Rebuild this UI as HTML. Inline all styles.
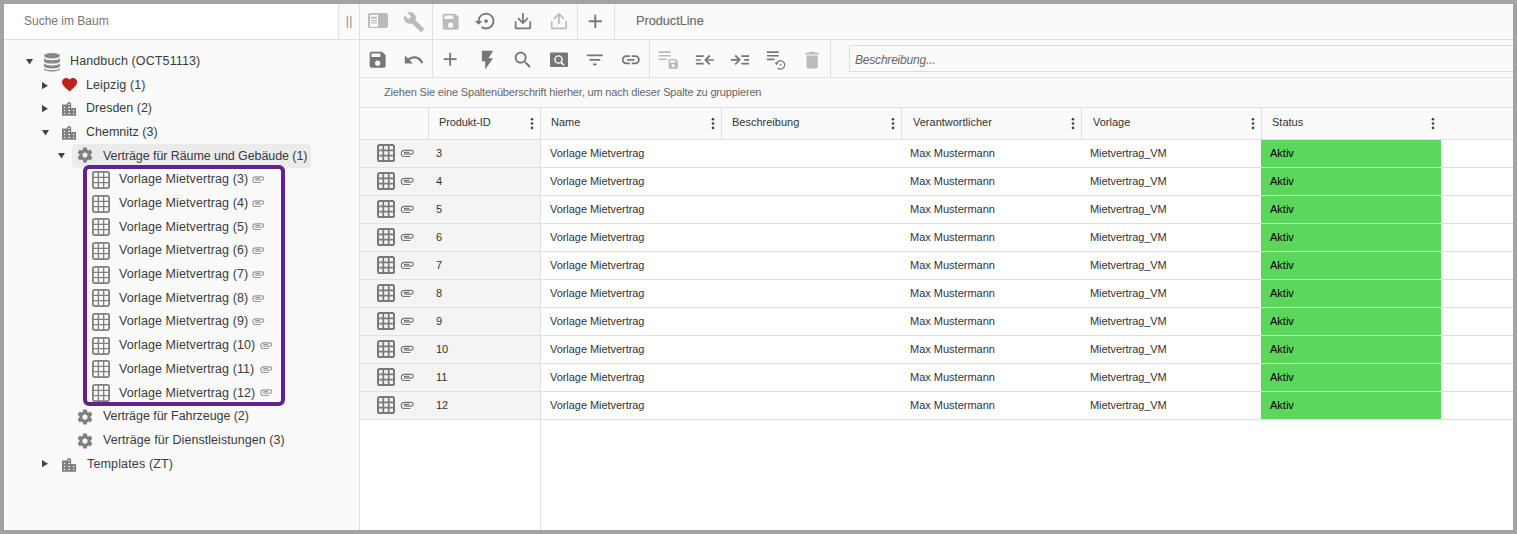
<!DOCTYPE html>
<html><head><meta charset="utf-8">
<style>
*{margin:0;padding:0;box-sizing:border-box}
html,body{width:1517px;height:534px;overflow:hidden;background:#a3a3a3;font-family:"Liberation Sans",sans-serif}
.a{position:absolute}
#app{position:absolute;left:4px;top:4px;width:1509px;height:526px;background:#fff;overflow:hidden}
/* left panel: coordinates in page space via wrapper at 0,0 */
.pg{position:absolute;left:-4px;top:-4px;width:1517px;height:534px}
.t{position:absolute;white-space:nowrap;line-height:14px}
.tree{font-size:12.5px;color:#3a3a3a}
.grid{font-size:11px;color:#333}
.hl{position:absolute;background:#e0e0e0}
.vl{position:absolute;background:#e0e0e0}
svg{position:absolute;overflow:visible}
</style></head>
<body>
<div id="app"><div class="pg">
<!-- LEFT PANEL -->
<div class="a" style="left:4px;top:4px;width:355px;height:526px;background:#fafafa"></div>
<div class="a" style="left:4px;top:4px;width:334px;height:35px;background:#fff"></div>
<div class="vl" style="left:338px;top:4px;width:1px;height:35px"></div>
<div class="hl" style="left:4px;top:39px;width:355px;height:1px"></div>
<div class="vl" style="left:359px;top:4px;width:1px;height:526px"></div>
<div class="t" style="left:24px;top:14px;font-size:12px;color:#757575">Suche im Baum</div>
<div class="t" style="left:345.8px;top:14px;font-size:12px;color:#888;letter-spacing:0.3px">||</div>
<!-- TREE -->
<div class="a" style="left:72px;top:144px;width:239px;height:24px;border-radius:4px;background:#ebebeb"></div>
<div class="t tree" style="left:70px;top:54px;letter-spacing:0.12px">Handbuch (OCT51113)</div>
<svg style="left:26px;top:58.60px" width="7" height="5.6"><path d="M0 0H7L3.5 5.6Z" fill="#444"/></svg>
<svg style="left:44px;top:52.60px" width="16" height="18.5" viewBox="0 0 16 18.5"><g fill="#888"><ellipse cx="8" cy="2.8" rx="8" ry="2.8"/><path d="M0 5C1 6.5 4 7.2 8 7.2S15 6.5 16 5V8.4C15 9.9 12 10.6 8 10.6S1 9.9 0 8.4Z"/><path d="M0 10.2C1 11.7 4 12.4 8 12.4S15 11.7 16 10.2V13.2C15 14.7 12 15.4 8 15.4S1 14.7 0 13.2Z"/><path d="M0 15C1 16.5 4 17.2 8 17.2S15 16.5 16 15V15.8C16 17.6 12 18.5 8 18.5S0 17.6 0 15.8Z"/></g></svg>
<div class="t tree" style="left:86px;top:78px;letter-spacing:0.1px">Leipzig (1)</div>
<svg style="left:42px;top:81.58px" width="6" height="7.3"><path d="M0 0L6 3.65L0 7.3Z" fill="#444"/></svg>
<svg style="left:61.5px;top:78.38px" width="15.2" height="13.6" viewBox="2 3 20 18.35" preserveAspectRatio="none"><path fill="#b8261e" d="M12 21.35l-1.45-1.32C5.4 15.36 2 12.28 2 8.5 2 5.42 4.42 3 7.5 3c1.74 0 3.41.81 4.5 2.09C13.09 3.81 14.76 3 16.5 3 19.58 3 22 5.42 22 8.5c0 3.78-3.4 6.86-8.55 11.54L12 21.35z"/></svg>
<div class="t tree" style="left:86px;top:101px;letter-spacing:0px">Dresden (2)</div>
<svg style="left:42px;top:105.26px" width="6" height="7.3"><path d="M0 0L6 3.65L0 7.3Z" fill="#444"/></svg>
<svg style="left:61.9px;top:102.36px" width="14.1" height="13.8" viewBox="0 0 14.1 13.8"><path fill="#808080" d="M0 2.6H5V2.1C5 0.8 5.9 0 7.1 0S9.2 0.8 9.2 2.1V5.9H14.1V13.8H0Z"/><g fill="#fafafa"><rect x="1.9" y="4.9" width="1.2" height="1.2"/><rect x="1.9" y="7.9" width="1.2" height="1.2"/><rect x="1.9" y="10.9" width="1.2" height="1.2"/><rect x="6.3" y="1.8" width="1.6" height="1.1"/><rect x="6.3" y="4.9" width="1.6" height="1.1"/><rect x="6.3" y="7.9" width="1.6" height="1.1"/><rect x="6.3" y="10.9" width="1.6" height="1.1"/><rect x="11" y="7.9" width="1.2" height="1.2"/><rect x="11" y="10.9" width="1.2" height="1.2"/></g></svg>
<div class="t tree" style="left:86px;top:125px;letter-spacing:0px">Chemnitz (3)</div>
<svg style="left:42px;top:129.64px" width="7" height="5.6"><path d="M0 0H7L3.5 5.6Z" fill="#444"/></svg>
<svg style="left:61.9px;top:126.04px" width="14.1" height="13.8" viewBox="0 0 14.1 13.8"><path fill="#808080" d="M0 2.6H5V2.1C5 0.8 5.9 0 7.1 0S9.2 0.8 9.2 2.1V5.9H14.1V13.8H0Z"/><g fill="#fafafa"><rect x="1.9" y="4.9" width="1.2" height="1.2"/><rect x="1.9" y="7.9" width="1.2" height="1.2"/><rect x="1.9" y="10.9" width="1.2" height="1.2"/><rect x="6.3" y="1.8" width="1.6" height="1.1"/><rect x="6.3" y="4.9" width="1.6" height="1.1"/><rect x="6.3" y="7.9" width="1.6" height="1.1"/><rect x="6.3" y="10.9" width="1.6" height="1.1"/><rect x="11" y="7.9" width="1.2" height="1.2"/><rect x="11" y="10.9" width="1.2" height="1.2"/></g></svg>
<div class="t tree" style="left:103px;top:149px;letter-spacing:-0.08px">Verträge für Räume und Gebäude (1)</div>
<svg style="left:58px;top:153.32px" width="7" height="5.6"><path d="M0 0H7L3.5 5.6Z" fill="#444"/></svg>
<svg style="left:76.3px;top:146.42px" width="18" height="18" viewBox="0 0 24 24"><path fill="#808080" d="M19.43 12.98c.04-.32.07-.64.07-.98s-.03-.66-.07-.98l2.11-1.65c.19-.15.24-.42.12-.64l-2-3.46c-.12-.22-.39-.3-.61-.22l-2.49 1c-.52-.4-1.08-.73-1.69-.98l-.38-2.65C14.46 2.18 14.25 2 14 2h-4c-.25 0-.46.18-.49.42l-.38 2.65c-.61.25-1.17.59-1.69.98l-2.49-1c-.23-.09-.49 0-.61.22l-2 3.46c-.13.22-.07.49.12.64l2.11 1.65c-.04.32-.07.65-.07.98s.03.66.07.98l-2.11 1.65c-.19.15-.24.42-.12.64l2 3.46c.12.22.39.3.61.22l2.49-1c.52.4 1.08.73 1.69.98l.38 2.65c.03.24.24.42.49.42h4c.25 0 .46-.18.49-.42l.38-2.65c.61-.25 1.17-.59 1.69-.98l2.49 1c.23.09.49 0 .61-.22l2-3.46c.12-.22.07-.49-.12-.64l-2.11-1.65zM12 15.5c-1.93 0-3.5-1.57-3.5-3.5s1.57-3.5 3.5-3.5 3.5 1.57 3.5 3.5-1.57 3.5-3.5 3.5z"/></svg>
<div class="t tree" style="left:119px;top:172px;letter-spacing:0.09px">Vorlage Mietvertrag (3)</div>
<svg style="left:92px;top:171.00px" width="18" height="18" viewBox="0 0 18 18"><rect x="0.9" y="0.9" width="16.2" height="16.2" rx="2" fill="none" stroke="#808080" stroke-width="1.8"/><path d="M6.35 1V17M11.65 1V17M1 6.35H17M1 11.65H17" stroke="#808080" stroke-width="1.4"/></svg>
<div class="t tree" style="left:119px;top:196px;letter-spacing:0.09px">Vorlage Mietvertrag (4)</div>
<svg style="left:92px;top:194.68px" width="18" height="18" viewBox="0 0 18 18"><rect x="0.9" y="0.9" width="16.2" height="16.2" rx="2" fill="none" stroke="#808080" stroke-width="1.8"/><path d="M6.35 1V17M11.65 1V17M1 6.35H17M1 11.65H17" stroke="#808080" stroke-width="1.4"/></svg>
<div class="t tree" style="left:119px;top:220px;letter-spacing:0.09px">Vorlage Mietvertrag (5)</div>
<svg style="left:92px;top:218.36px" width="18" height="18" viewBox="0 0 18 18"><rect x="0.9" y="0.9" width="16.2" height="16.2" rx="2" fill="none" stroke="#808080" stroke-width="1.8"/><path d="M6.35 1V17M11.65 1V17M1 6.35H17M1 11.65H17" stroke="#808080" stroke-width="1.4"/></svg>
<div class="t tree" style="left:119px;top:243px;letter-spacing:0.09px">Vorlage Mietvertrag (6)</div>
<svg style="left:92px;top:242.04px" width="18" height="18" viewBox="0 0 18 18"><rect x="0.9" y="0.9" width="16.2" height="16.2" rx="2" fill="none" stroke="#808080" stroke-width="1.8"/><path d="M6.35 1V17M11.65 1V17M1 6.35H17M1 11.65H17" stroke="#808080" stroke-width="1.4"/></svg>
<div class="t tree" style="left:119px;top:267px;letter-spacing:0.09px">Vorlage Mietvertrag (7)</div>
<svg style="left:92px;top:265.72px" width="18" height="18" viewBox="0 0 18 18"><rect x="0.9" y="0.9" width="16.2" height="16.2" rx="2" fill="none" stroke="#808080" stroke-width="1.8"/><path d="M6.35 1V17M11.65 1V17M1 6.35H17M1 11.65H17" stroke="#808080" stroke-width="1.4"/></svg>
<div class="t tree" style="left:119px;top:291px;letter-spacing:0.09px">Vorlage Mietvertrag (8)</div>
<svg style="left:92px;top:289.40px" width="18" height="18" viewBox="0 0 18 18"><rect x="0.9" y="0.9" width="16.2" height="16.2" rx="2" fill="none" stroke="#808080" stroke-width="1.8"/><path d="M6.35 1V17M11.65 1V17M1 6.35H17M1 11.65H17" stroke="#808080" stroke-width="1.4"/></svg>
<div class="t tree" style="left:119px;top:314px;letter-spacing:0.09px">Vorlage Mietvertrag (9)</div>
<svg style="left:92px;top:313.08px" width="18" height="18" viewBox="0 0 18 18"><rect x="0.9" y="0.9" width="16.2" height="16.2" rx="2" fill="none" stroke="#808080" stroke-width="1.8"/><path d="M6.35 1V17M11.65 1V17M1 6.35H17M1 11.65H17" stroke="#808080" stroke-width="1.4"/></svg>
<div class="t tree" style="left:119px;top:338px;letter-spacing:0.09px">Vorlage Mietvertrag (10)</div>
<svg style="left:92px;top:336.76px" width="18" height="18" viewBox="0 0 18 18"><rect x="0.9" y="0.9" width="16.2" height="16.2" rx="2" fill="none" stroke="#808080" stroke-width="1.8"/><path d="M6.35 1V17M11.65 1V17M1 6.35H17M1 11.65H17" stroke="#808080" stroke-width="1.4"/></svg>
<div class="t tree" style="left:119px;top:362px;letter-spacing:0.09px">Vorlage Mietvertrag (11)</div>
<svg style="left:92px;top:360.44px" width="18" height="18" viewBox="0 0 18 18"><rect x="0.9" y="0.9" width="16.2" height="16.2" rx="2" fill="none" stroke="#808080" stroke-width="1.8"/><path d="M6.35 1V17M11.65 1V17M1 6.35H17M1 11.65H17" stroke="#808080" stroke-width="1.4"/></svg>
<div class="t tree" style="left:119px;top:386px;letter-spacing:0.09px">Vorlage Mietvertrag (12)</div>
<svg style="left:92px;top:384.12px" width="18" height="18" viewBox="0 0 18 18"><rect x="0.9" y="0.9" width="16.2" height="16.2" rx="2" fill="none" stroke="#808080" stroke-width="1.8"/><path d="M6.35 1V17M11.65 1V17M1 6.35H17M1 11.65H17" stroke="#808080" stroke-width="1.4"/></svg>
<div class="t tree" style="left:103px;top:409px;letter-spacing:-0.055px">Verträge für Fahrzeuge (2)</div>
<svg style="left:76.3px;top:408.30px" width="18" height="18" viewBox="0 0 24 24"><path fill="#808080" d="M19.43 12.98c.04-.32.07-.64.07-.98s-.03-.66-.07-.98l2.11-1.65c.19-.15.24-.42.12-.64l-2-3.46c-.12-.22-.39-.3-.61-.22l-2.49 1c-.52-.4-1.08-.73-1.69-.98l-.38-2.65C14.46 2.18 14.25 2 14 2h-4c-.25 0-.46.18-.49.42l-.38 2.65c-.61.25-1.17.59-1.69.98l-2.49-1c-.23-.09-.49 0-.61.22l-2 3.46c-.13.22-.07.49.12.64l2.11 1.65c-.04.32-.07.65-.07.98s.03.66.07.98l-2.11 1.65c-.19.15-.24.42-.12.64l2 3.46c.12.22.39.3.61.22l2.49-1c.52.4 1.08.73 1.69.98l.38 2.65c.03.24.24.42.49.42h4c.25 0 .46-.18.49-.42l.38-2.65c.61-.25 1.17-.59 1.69-.98l2.49 1c.23.09.49 0 .61-.22l2-3.46c.12-.22.07-.49-.12-.64l-2.11-1.65zM12 15.5c-1.93 0-3.5-1.57-3.5-3.5s1.57-3.5 3.5-3.5 3.5 1.57 3.5 3.5-1.57 3.5-3.5 3.5z"/></svg>
<div class="t tree" style="left:103px;top:433px;letter-spacing:0.055px">Verträge für Dienstleistungen (3)</div>
<svg style="left:76.3px;top:431.98px" width="18" height="18" viewBox="0 0 24 24"><path fill="#808080" d="M19.43 12.98c.04-.32.07-.64.07-.98s-.03-.66-.07-.98l2.11-1.65c.19-.15.24-.42.12-.64l-2-3.46c-.12-.22-.39-.3-.61-.22l-2.49 1c-.52-.4-1.08-.73-1.69-.98l-.38-2.65C14.46 2.18 14.25 2 14 2h-4c-.25 0-.46.18-.49.42l-.38 2.65c-.61.25-1.17.59-1.69.98l-2.49-1c-.23-.09-.49 0-.61.22l-2 3.46c-.13.22-.07.49.12.64l2.11 1.65c-.04.32-.07.65-.07.98s.03.66.07.98l-2.11 1.65c-.19.15-.24.42-.12.64l2 3.46c.12.22.39.3.61.22l2.49-1c.52.4 1.08.73 1.69.98l.38 2.65c.03.24.24.42.49.42h4c.25 0 .46-.18.49-.42l.38-2.65c.61-.25 1.17-.59 1.69-.98l2.49 1c.23.09.49 0 .61-.22l2-3.46c.12-.22.07-.49-.12-.64l-2.11-1.65zM12 15.5c-1.93 0-3.5-1.57-3.5-3.5s1.57-3.5 3.5-3.5 3.5 1.57 3.5 3.5-1.57 3.5-3.5 3.5z"/></svg>
<div class="t tree" style="left:87px;top:457px;letter-spacing:0.15px">Templates (ZT)</div>
<svg style="left:42px;top:460.46px" width="6" height="7.3"><path d="M0 0L6 3.65L0 7.3Z" fill="#444"/></svg>
<svg style="left:61.9px;top:457.56px" width="14.1" height="13.8" viewBox="0 0 14.1 13.8"><path fill="#808080" d="M0 2.6H5V2.1C5 0.8 5.9 0 7.1 0S9.2 0.8 9.2 2.1V5.9H14.1V13.8H0Z"/><g fill="#fafafa"><rect x="1.9" y="4.9" width="1.2" height="1.2"/><rect x="1.9" y="7.9" width="1.2" height="1.2"/><rect x="1.9" y="10.9" width="1.2" height="1.2"/><rect x="6.3" y="1.8" width="1.6" height="1.1"/><rect x="6.3" y="4.9" width="1.6" height="1.1"/><rect x="6.3" y="7.9" width="1.6" height="1.1"/><rect x="6.3" y="10.9" width="1.6" height="1.1"/><rect x="11" y="7.9" width="1.2" height="1.2"/><rect x="11" y="10.9" width="1.2" height="1.2"/></g></svg>

<svg style="left:249.19px;top:173.10px" width="18.00" height="12.60" viewBox="0 0 20 14"><path d="M13.2 10.5H7.35A3.1 3.1 0 0 1 7.35 4.3H14.35A1.9 1.9 0 0 1 14.35 8.1H8.25A0.9 0.9 0 0 1 8.25 6.3H12.3" fill="none" stroke="#9a9a9a" stroke-width="1.25"/></svg>
<svg style="left:249.19px;top:196.78px" width="18.00" height="12.60" viewBox="0 0 20 14"><path d="M13.2 10.5H7.35A3.1 3.1 0 0 1 7.35 4.3H14.35A1.9 1.9 0 0 1 14.35 8.1H8.25A0.9 0.9 0 0 1 8.25 6.3H12.3" fill="none" stroke="#9a9a9a" stroke-width="1.25"/></svg>
<svg style="left:249.19px;top:220.46px" width="18.00" height="12.60" viewBox="0 0 20 14"><path d="M13.2 10.5H7.35A3.1 3.1 0 0 1 7.35 4.3H14.35A1.9 1.9 0 0 1 14.35 8.1H8.25A0.9 0.9 0 0 1 8.25 6.3H12.3" fill="none" stroke="#9a9a9a" stroke-width="1.25"/></svg>
<svg style="left:249.19px;top:244.14px" width="18.00" height="12.60" viewBox="0 0 20 14"><path d="M13.2 10.5H7.35A3.1 3.1 0 0 1 7.35 4.3H14.35A1.9 1.9 0 0 1 14.35 8.1H8.25A0.9 0.9 0 0 1 8.25 6.3H12.3" fill="none" stroke="#9a9a9a" stroke-width="1.25"/></svg>
<svg style="left:249.19px;top:267.82px" width="18.00" height="12.60" viewBox="0 0 20 14"><path d="M13.2 10.5H7.35A3.1 3.1 0 0 1 7.35 4.3H14.35A1.9 1.9 0 0 1 14.35 8.1H8.25A0.9 0.9 0 0 1 8.25 6.3H12.3" fill="none" stroke="#9a9a9a" stroke-width="1.25"/></svg>
<svg style="left:249.19px;top:291.50px" width="18.00" height="12.60" viewBox="0 0 20 14"><path d="M13.2 10.5H7.35A3.1 3.1 0 0 1 7.35 4.3H14.35A1.9 1.9 0 0 1 14.35 8.1H8.25A0.9 0.9 0 0 1 8.25 6.3H12.3" fill="none" stroke="#9a9a9a" stroke-width="1.25"/></svg>
<svg style="left:249.19px;top:315.18px" width="18.00" height="12.60" viewBox="0 0 20 14"><path d="M13.2 10.5H7.35A3.1 3.1 0 0 1 7.35 4.3H14.35A1.9 1.9 0 0 1 14.35 8.1H8.25A0.9 0.9 0 0 1 8.25 6.3H12.3" fill="none" stroke="#9a9a9a" stroke-width="1.25"/></svg>
<svg style="left:256.99px;top:338.86px" width="18.00" height="12.60" viewBox="0 0 20 14"><path d="M13.2 10.5H7.35A3.1 3.1 0 0 1 7.35 4.3H14.35A1.9 1.9 0 0 1 14.35 8.1H8.25A0.9 0.9 0 0 1 8.25 6.3H12.3" fill="none" stroke="#9a9a9a" stroke-width="1.25"/></svg>
<svg style="left:256.99px;top:362.54px" width="18.00" height="12.60" viewBox="0 0 20 14"><path d="M13.2 10.5H7.35A3.1 3.1 0 0 1 7.35 4.3H14.35A1.9 1.9 0 0 1 14.35 8.1H8.25A0.9 0.9 0 0 1 8.25 6.3H12.3" fill="none" stroke="#9a9a9a" stroke-width="1.25"/></svg>
<svg style="left:256.99px;top:386.22px" width="18.00" height="12.60" viewBox="0 0 20 14"><path d="M13.2 10.5H7.35A3.1 3.1 0 0 1 7.35 4.3H14.35A1.9 1.9 0 0 1 14.35 8.1H8.25A0.9 0.9 0 0 1 8.25 6.3H12.3" fill="none" stroke="#9a9a9a" stroke-width="1.25"/></svg>
<div class="a" style="left:83px;top:165px;width:202px;height:241px;border:4px solid #63218b;border-radius:6px"></div>
<!-- RIGHT PANEL -->
<div class="a" style="left:360px;top:4px;width:1153px;height:104px;background:#fafafa"></div>
<div class="a" style="left:360px;top:108px;width:1153px;height:32px;background:#fafafa"></div>
<div class="a" style="left:360px;top:39px;width:1153px;height:1px;background:#e0e0e0"></div>
<div class="a" style="left:360px;top:77px;width:1153px;height:1px;background:#e0e0e0"></div>
<div class="a" style="left:360px;top:107px;width:1153px;height:1px;background:#e0e0e0"></div>
<div class="a" style="left:360px;top:139px;width:1153px;height:1px;background:#e0e0e0"></div>
<div class="a" style="left:432px;top:4px;width:1px;height:35px;background:#e0e0e0"></div>
<div class="a" style="left:577px;top:4px;width:1px;height:35px;background:#e0e0e0"></div>
<div class="a" style="left:614px;top:4px;width:1px;height:35px;background:#e0e0e0"></div>
<div class="a" style="left:432px;top:40px;width:1px;height:37px;background:#e0e0e0"></div>
<div class="a" style="left:649px;top:40px;width:1px;height:37px;background:#e0e0e0"></div>
<div class="a" style="left:830px;top:40px;width:1px;height:37px;background:#e0e0e0"></div>
<svg style="left:368.00px;top:13.00px" width="20.00" height="15.00" viewBox="0 0 20 15" ><rect x="0" y="0" width="20" height="15" rx="2" fill="#bbb"/><rect x="2" y="1.8" width="8" height="12" fill="#fff"/><path d="M3 5H9M3 7.6H9M3 9.8H9" stroke="#bbb" stroke-width="1.2"/><path d="M3 4.6H9" stroke="#bbb" stroke-width="1.8"/></svg>
<svg style="left:402.50px;top:11.00px" width="22.00" height="22.00" viewBox="0 0 24 24" ><path fill="#bbb" d="M22.7 19l-9.1-9.1c.9-2.3.4-5-1.5-6.9-2-2-5-2.4-7.4-1.3L9 6 6 9 1.6 4.7C.4 7.1.9 10.1 2.9 12.1c1.9 1.9 4.6 2.4 6.9 1.5l9.1 9.1c.4.4 1 .4 1.4 0l2.3-2.3c.5-.4.5-1.1.1-1.4z"/></svg>
<svg style="left:440.30px;top:11.30px" width="21.30" height="21.30" viewBox="0 0 24 24" ><path fill="#bbb" d="M17 3H5c-1.11 0-2 .9-2 2v14c0 1.1.89 2 2 2h14c1.1 0 2-.9 2-2V7l-4-4zm-5 16c-1.66 0-3-1.34-3-3s1.34-3 3-3 3 1.34 3 3-1.34 3-3 3zm3-10H5V5h10v4z"/></svg>
<svg style="left:475.30px;top:10.10px" width="22.20" height="22.20" viewBox="0 0 24 24" ><path fill="#777" d="M14 12c0-1.1-.9-2-2-2s-2 .9-2 2 .9 2 2 2 2-.9 2-2zm-2-9c-4.97 0-9 4.03-9 9H0l4 4 4-4H5c0-3.87 3.13-7 7-7s7 3.13 7 7-3.13 7-7 7c-1.51 0-2.91-.49-4.06-1.3l-1.42 1.44C8.04 20.3 9.94 21 12 21c4.97 0 9-4.03 9-9s-4.03-9-9-9z"/></svg>
<svg style="left:510.00px;top:8.00px" width="26.00" height="26.00" viewBox="510 8 26 26" ><path d="M515.6 21.2V27.4Q515.6 28.4 516.6 28.4H529.2Q530.2 28.4 530.2 27.4V21.2M522.9 13.1V23M518 18.2L522.9 23.1L527.8 18.2" fill="none" stroke="#777" stroke-width="1.7"/></svg>
<svg style="left:546.00px;top:8.00px" width="26.00" height="26.00" viewBox="510 8 26 26" ><path d="M515.6 21.2V27.4Q515.6 28.4 516.6 28.4H529.2Q530.2 28.4 530.2 27.4V21.2M522.9 24V14M518 18.9L522.9 14L527.8 18.9" fill="none" stroke="#bbb" stroke-width="1.7"/></svg>
<svg style="left:584.30px;top:9.80px" width="22.60" height="22.60" viewBox="0 0 24 24" ><path fill="#777" d="M19 13h-6v6h-2v-6H5v-2h6V5h2v6h6v2z"/></svg>
<div class="t" style="left:636px;top:14px;font-size:12.7px;color:#6a6a6a;-webkit-text-stroke:0.15px #6a6a6a">ProductLine</div>
<svg style="left:367.30px;top:49.30px" width="21.30" height="21.30" viewBox="0 0 24 24" ><path fill="#777" d="M17 3H5c-1.11 0-2 .9-2 2v14c0 1.1.89 2 2 2h14c1.1 0 2-.9 2-2V7l-4-4zm-5 16c-1.66 0-3-1.34-3-3s1.34-3 3-3 3 1.34 3 3-1.34 3-3 3zm3-10H5V5h10v4z"/></svg>
<svg style="left:403.00px;top:49.00px" width="21.60" height="21.60" viewBox="0 0 24 24" ><path fill="#777" d="M12.5 8c-2.65 0-5.05.99-6.9 2.6L2 7v9h9l-3.62-3.62c1.39-1.16 3.16-1.88 5.12-1.88 3.54 0 6.55 2.31 7.6 5.5l2.37-.78C21.08 11.03 17.15 8 12.5 8z"/></svg>
<svg style="left:439.30px;top:48.30px" width="22.30" height="22.30" viewBox="0 0 24 24" ><path fill="#777" d="M19 13h-6v6h-2v-6H5v-2h6V5h2v6h6v2z"/></svg>
<svg style="left:474.30px;top:49.00px" width="26.90" height="22.40" viewBox="0 0 24 24" preserveAspectRatio="none"><path fill="#777" d="M7 2v11h3v9l7-12h-4l4-8z"/></svg>
<svg style="left:512.30px;top:48.90px" width="21.90" height="21.90" viewBox="0 0 24 24" ><path fill="#777" d="M15.5 14h-.79l-.28-.27C15.41 12.59 16 11.11 16 9.5 16 5.91 13.09 3 9.5 3S3 5.91 3 9.5 5.91 16 9.5 16c1.61 0 3.09-.59 4.23-1.57l.27.28v.79l5 4.99L20.49 19l-4.99-5zm-6 0C7.01 14 5 11.99 5 9.5S7.01 5 9.5 5 14 7.01 14 9.5 11.99 14 9.5 14z"/></svg>
<svg style="left:545.00px;top:46.00px" width="26.00" height="26.00" viewBox="545 46 26 26" ><rect x="550" y="52.6" width="18" height="14.5" rx="1.2" fill="#777"/><circle cx="558.5" cy="59.5" r="3.6" fill="none" stroke="#fff" stroke-width="1.4"/><path d="M560.9 62L564 65.2" stroke="#fff" stroke-width="1.6"/></svg>
<svg style="left:584.30px;top:48.80px" width="21.60" height="21.60" viewBox="0 0 24 24" ><path fill="#777" d="M10 18h4v-2h-4v2zM3 6v2h18V6H3zm3 7h12v-2H6v2z"/></svg>
<svg style="left:620.20px;top:49.00px" width="21.60" height="21.60" viewBox="0 0 24 24" ><path fill="#777" d="M3.9 12c0-1.71 1.39-3.1 3.1-3.1h4V7H7c-2.76 0-5 2.24-5 5s2.24 5 5 5h4v-1.9H7c-1.71 0-3.1-1.39-3.1-3.1zM8 13h8v-2H8v2zm9-6h-4v1.9h4c1.71 0 3.1 1.39 3.1 3.1s-1.39 3.1-3.1 3.1h-4V17h4c2.76 0 5-2.24 5-5s-2.24-5-5-5z"/></svg>
<svg style="left:655.00px;top:46.00px" width="26.00" height="26.00" viewBox="655 46 26 26" ><path d="M658.7 52.1H670.8M658.7 55.7H670.8M658.7 59.2H666.7" stroke="#bbb" stroke-width="1.6"/><path fill="#bbb" d="M668.6 60Q668.6 59 669.6 59H675.6L677.9 61.3V67.8Q677.9 68.8 676.9 68.8H669.6Q668.6 68.8 668.6 67.8Z"/><rect x="670" y="60.4" width="5.2" height="2.2" fill="#fafafa"/><circle cx="673.2" cy="65.4" r="1.5" fill="#fafafa"/></svg>
<svg style="left:690.00px;top:46.00px" width="30.00" height="26.00" viewBox="690 46 30 26" ><path d="M695.9 56.2H703.7M695.9 60H700.8M695.9 63.6H703.7M705.2 60H713.9" stroke="#777" stroke-width="1.7"/><path d="M709.8 55.5L705.4 60L709.8 64.3" fill="none" stroke="#777" stroke-width="1.8"/></svg>
<svg style="left:725.00px;top:46.00px" width="30.00" height="26.00" viewBox="725 46 30 26" ><path d="M741.2 56.2H749.1M744.1 59.8H749.1M741.2 63.7H749.1M730.9 59.8H739.4" stroke="#777" stroke-width="1.7"/><path d="M735.2 55.5L739.6 59.8L735.2 64.3" fill="none" stroke="#777" stroke-width="1.8"/></svg>
<svg style="left:760.00px;top:46.00px" width="30.00" height="26.00" viewBox="760 46 30 26" ><path d="M766.9 52.1H778.7M766.9 55.8H778.7M766.9 59.4H774.4" stroke="#777" stroke-width="1.6"/><path d="M776.6 63.2A4.2 4.2 0 1 1 777.6 68" fill="none" stroke="#777" stroke-width="1.2"/><path d="M774.6 62.5L776.6 65.2L778.6 62.5Z" fill="#777"/><circle cx="780.6" cy="64.7" r="0.9" fill="#777"/></svg>
<svg style="left:800.85px;top:48.80px" width="22.30" height="22.30" viewBox="0 0 24 24" ><path fill="#bbb" d="M6 19c0 1.1.9 2 2 2h8c1.1 0 2-.9 2-2V7H6v12zM19 4h-3.5l-1-1h-5l-1 1H5v2h14V4z"/></svg>
<div class="a" style="left:849px;top:45px;width:700px;height:27px;border:1px solid #dcdcdc;background:#fafafa"></div>
<div class="t" style="left:855px;top:53px;font-size:12px;font-style:italic;color:#666;letter-spacing:-0.2px">Beschreibung...</div>
<div class="t grid" style="left:384px;top:85px;color:#666;letter-spacing:-0.17px">Ziehen Sie eine Spaltenüberschrift hierher, um nach dieser Spalte zu gruppieren</div>
<div class="a" style="left:428px;top:108px;width:1px;height:31px;background:#e0e0e0"></div>
<div class="a" style="left:540px;top:108px;width:1px;height:31px;background:#e0e0e0"></div>
<div class="a" style="left:721px;top:108px;width:1px;height:31px;background:#e0e0e0"></div>
<div class="a" style="left:901px;top:108px;width:1px;height:31px;background:#e0e0e0"></div>
<div class="a" style="left:1081px;top:108px;width:1px;height:31px;background:#e0e0e0"></div>
<div class="a" style="left:1261px;top:108px;width:1px;height:31px;background:#e0e0e0"></div>
<div class="a" style="left:540px;top:140px;width:1px;height:390px;background:#e0e0e0"></div>
<div class="t grid" style="left:439px;top:115px;letter-spacing:-0.1px">Produkt-ID</div>
<div class="t grid" style="left:551px;top:115px;letter-spacing:0px">Name</div>
<div class="t grid" style="left:732px;top:115px;letter-spacing:0px">Beschreibung</div>
<div class="t grid" style="left:913px;top:115px;letter-spacing:0px">Verantwortlicher</div>
<div class="t grid" style="left:1093px;top:115px;letter-spacing:0px">Vorlage</div>
<div class="t grid" style="left:1272px;top:115px;letter-spacing:0px">Status</div>
<svg style="left:529.50px;top:117.00px" width="4.00" height="13.00" viewBox="0 0 4 13" ><circle cx="2" cy="2.2" r="1.3" fill="#444"/><circle cx="2" cy="6.5" r="1.3" fill="#444"/><circle cx="2" cy="10.9" r="1.3" fill="#444"/></svg>
<svg style="left:710.50px;top:117.00px" width="4.00" height="13.00" viewBox="0 0 4 13" ><circle cx="2" cy="2.2" r="1.3" fill="#444"/><circle cx="2" cy="6.5" r="1.3" fill="#444"/><circle cx="2" cy="10.9" r="1.3" fill="#444"/></svg>
<svg style="left:890.50px;top:117.00px" width="4.00" height="13.00" viewBox="0 0 4 13" ><circle cx="2" cy="2.2" r="1.3" fill="#444"/><circle cx="2" cy="6.5" r="1.3" fill="#444"/><circle cx="2" cy="10.9" r="1.3" fill="#444"/></svg>
<svg style="left:1070.50px;top:117.00px" width="4.00" height="13.00" viewBox="0 0 4 13" ><circle cx="2" cy="2.2" r="1.3" fill="#444"/><circle cx="2" cy="6.5" r="1.3" fill="#444"/><circle cx="2" cy="10.9" r="1.3" fill="#444"/></svg>
<svg style="left:1250.50px;top:117.00px" width="4.00" height="13.00" viewBox="0 0 4 13" ><circle cx="2" cy="2.2" r="1.3" fill="#444"/><circle cx="2" cy="6.5" r="1.3" fill="#444"/><circle cx="2" cy="10.9" r="1.3" fill="#444"/></svg>
<svg style="left:1430.50px;top:117.00px" width="4.00" height="13.00" viewBox="0 0 4 13" ><circle cx="2" cy="2.2" r="1.3" fill="#444"/><circle cx="2" cy="6.5" r="1.3" fill="#444"/><circle cx="2" cy="10.9" r="1.3" fill="#444"/></svg>
<div class="a" style="left:360px;top:140px;width:180px;height:280px;background:#f4f4f4"></div>
<div class="a" style="left:360px;top:167px;width:1153px;height:1px;background:#e0e0e0"></div>
<div class="a" style="left:1261px;top:140px;width:180px;height:27px;background:#5cd65c"></div>
<svg style="left:377.00px;top:144.00px" width="18.00" height="18.00" viewBox="0 0 18 18" ><rect x="1" y="1" width="16" height="16" rx="1.6" fill="none" stroke="#7a7a7a" stroke-width="2"/><path d="M6.3 1V17M11.7 1V17M1 6.3H17M1 11.7H17" stroke="#7a7a7a" stroke-width="1.8"/></svg>
<svg style="left:396.72px;top:145.88px" width="20.00" height="14.00" viewBox="0 0 20 14"><path d="M13.2 10.5H7.35A3.1 3.1 0 0 1 7.35 4.3H14.35A1.9 1.9 0 0 1 14.35 8.1H8.25A0.9 0.9 0 0 1 8.25 6.3H12.3" fill="none" stroke="#777" stroke-width="1.15"/></svg>
<div class="t grid" style="left:436px;top:146px">3</div>
<div class="t grid" style="left:550px;top:146px;letter-spacing:-0.05px">Vorlage Mietvertrag</div>
<div class="t grid" style="left:910px;top:146px">Max Mustermann</div>
<div class="t grid" style="left:1090px;top:146px;letter-spacing:-0.07px">Mietvertrag_VM</div>
<div class="t grid" style="left:1270px;top:146px;color:#000">Aktiv</div>
<div class="a" style="left:360px;top:195px;width:1153px;height:1px;background:#e0e0e0"></div>
<div class="a" style="left:1261px;top:168px;width:180px;height:27px;background:#5cd65c"></div>
<svg style="left:377.00px;top:172.00px" width="18.00" height="18.00" viewBox="0 0 18 18" ><rect x="1" y="1" width="16" height="16" rx="1.6" fill="none" stroke="#7a7a7a" stroke-width="2"/><path d="M6.3 1V17M11.7 1V17M1 6.3H17M1 11.7H17" stroke="#7a7a7a" stroke-width="1.8"/></svg>
<svg style="left:396.72px;top:173.88px" width="20.00" height="14.00" viewBox="0 0 20 14"><path d="M13.2 10.5H7.35A3.1 3.1 0 0 1 7.35 4.3H14.35A1.9 1.9 0 0 1 14.35 8.1H8.25A0.9 0.9 0 0 1 8.25 6.3H12.3" fill="none" stroke="#777" stroke-width="1.15"/></svg>
<div class="t grid" style="left:436px;top:174px">4</div>
<div class="t grid" style="left:550px;top:174px;letter-spacing:-0.05px">Vorlage Mietvertrag</div>
<div class="t grid" style="left:910px;top:174px">Max Mustermann</div>
<div class="t grid" style="left:1090px;top:174px;letter-spacing:-0.07px">Mietvertrag_VM</div>
<div class="t grid" style="left:1270px;top:174px;color:#000">Aktiv</div>
<div class="a" style="left:360px;top:223px;width:1153px;height:1px;background:#e0e0e0"></div>
<div class="a" style="left:1261px;top:196px;width:180px;height:27px;background:#5cd65c"></div>
<svg style="left:377.00px;top:200.00px" width="18.00" height="18.00" viewBox="0 0 18 18" ><rect x="1" y="1" width="16" height="16" rx="1.6" fill="none" stroke="#7a7a7a" stroke-width="2"/><path d="M6.3 1V17M11.7 1V17M1 6.3H17M1 11.7H17" stroke="#7a7a7a" stroke-width="1.8"/></svg>
<svg style="left:396.72px;top:201.88px" width="20.00" height="14.00" viewBox="0 0 20 14"><path d="M13.2 10.5H7.35A3.1 3.1 0 0 1 7.35 4.3H14.35A1.9 1.9 0 0 1 14.35 8.1H8.25A0.9 0.9 0 0 1 8.25 6.3H12.3" fill="none" stroke="#777" stroke-width="1.15"/></svg>
<div class="t grid" style="left:436px;top:202px">5</div>
<div class="t grid" style="left:550px;top:202px;letter-spacing:-0.05px">Vorlage Mietvertrag</div>
<div class="t grid" style="left:910px;top:202px">Max Mustermann</div>
<div class="t grid" style="left:1090px;top:202px;letter-spacing:-0.07px">Mietvertrag_VM</div>
<div class="t grid" style="left:1270px;top:202px;color:#000">Aktiv</div>
<div class="a" style="left:360px;top:251px;width:1153px;height:1px;background:#e0e0e0"></div>
<div class="a" style="left:1261px;top:224px;width:180px;height:27px;background:#5cd65c"></div>
<svg style="left:377.00px;top:228.00px" width="18.00" height="18.00" viewBox="0 0 18 18" ><rect x="1" y="1" width="16" height="16" rx="1.6" fill="none" stroke="#7a7a7a" stroke-width="2"/><path d="M6.3 1V17M11.7 1V17M1 6.3H17M1 11.7H17" stroke="#7a7a7a" stroke-width="1.8"/></svg>
<svg style="left:396.72px;top:229.88px" width="20.00" height="14.00" viewBox="0 0 20 14"><path d="M13.2 10.5H7.35A3.1 3.1 0 0 1 7.35 4.3H14.35A1.9 1.9 0 0 1 14.35 8.1H8.25A0.9 0.9 0 0 1 8.25 6.3H12.3" fill="none" stroke="#777" stroke-width="1.15"/></svg>
<div class="t grid" style="left:436px;top:230px">6</div>
<div class="t grid" style="left:550px;top:230px;letter-spacing:-0.05px">Vorlage Mietvertrag</div>
<div class="t grid" style="left:910px;top:230px">Max Mustermann</div>
<div class="t grid" style="left:1090px;top:230px;letter-spacing:-0.07px">Mietvertrag_VM</div>
<div class="t grid" style="left:1270px;top:230px;color:#000">Aktiv</div>
<div class="a" style="left:360px;top:279px;width:1153px;height:1px;background:#e0e0e0"></div>
<div class="a" style="left:1261px;top:252px;width:180px;height:27px;background:#5cd65c"></div>
<svg style="left:377.00px;top:256.00px" width="18.00" height="18.00" viewBox="0 0 18 18" ><rect x="1" y="1" width="16" height="16" rx="1.6" fill="none" stroke="#7a7a7a" stroke-width="2"/><path d="M6.3 1V17M11.7 1V17M1 6.3H17M1 11.7H17" stroke="#7a7a7a" stroke-width="1.8"/></svg>
<svg style="left:396.72px;top:257.88px" width="20.00" height="14.00" viewBox="0 0 20 14"><path d="M13.2 10.5H7.35A3.1 3.1 0 0 1 7.35 4.3H14.35A1.9 1.9 0 0 1 14.35 8.1H8.25A0.9 0.9 0 0 1 8.25 6.3H12.3" fill="none" stroke="#777" stroke-width="1.15"/></svg>
<div class="t grid" style="left:436px;top:258px">7</div>
<div class="t grid" style="left:550px;top:258px;letter-spacing:-0.05px">Vorlage Mietvertrag</div>
<div class="t grid" style="left:910px;top:258px">Max Mustermann</div>
<div class="t grid" style="left:1090px;top:258px;letter-spacing:-0.07px">Mietvertrag_VM</div>
<div class="t grid" style="left:1270px;top:258px;color:#000">Aktiv</div>
<div class="a" style="left:360px;top:307px;width:1153px;height:1px;background:#e0e0e0"></div>
<div class="a" style="left:1261px;top:280px;width:180px;height:27px;background:#5cd65c"></div>
<svg style="left:377.00px;top:284.00px" width="18.00" height="18.00" viewBox="0 0 18 18" ><rect x="1" y="1" width="16" height="16" rx="1.6" fill="none" stroke="#7a7a7a" stroke-width="2"/><path d="M6.3 1V17M11.7 1V17M1 6.3H17M1 11.7H17" stroke="#7a7a7a" stroke-width="1.8"/></svg>
<svg style="left:396.72px;top:285.88px" width="20.00" height="14.00" viewBox="0 0 20 14"><path d="M13.2 10.5H7.35A3.1 3.1 0 0 1 7.35 4.3H14.35A1.9 1.9 0 0 1 14.35 8.1H8.25A0.9 0.9 0 0 1 8.25 6.3H12.3" fill="none" stroke="#777" stroke-width="1.15"/></svg>
<div class="t grid" style="left:436px;top:286px">8</div>
<div class="t grid" style="left:550px;top:286px;letter-spacing:-0.05px">Vorlage Mietvertrag</div>
<div class="t grid" style="left:910px;top:286px">Max Mustermann</div>
<div class="t grid" style="left:1090px;top:286px;letter-spacing:-0.07px">Mietvertrag_VM</div>
<div class="t grid" style="left:1270px;top:286px;color:#000">Aktiv</div>
<div class="a" style="left:360px;top:335px;width:1153px;height:1px;background:#e0e0e0"></div>
<div class="a" style="left:1261px;top:308px;width:180px;height:27px;background:#5cd65c"></div>
<svg style="left:377.00px;top:312.00px" width="18.00" height="18.00" viewBox="0 0 18 18" ><rect x="1" y="1" width="16" height="16" rx="1.6" fill="none" stroke="#7a7a7a" stroke-width="2"/><path d="M6.3 1V17M11.7 1V17M1 6.3H17M1 11.7H17" stroke="#7a7a7a" stroke-width="1.8"/></svg>
<svg style="left:396.72px;top:313.88px" width="20.00" height="14.00" viewBox="0 0 20 14"><path d="M13.2 10.5H7.35A3.1 3.1 0 0 1 7.35 4.3H14.35A1.9 1.9 0 0 1 14.35 8.1H8.25A0.9 0.9 0 0 1 8.25 6.3H12.3" fill="none" stroke="#777" stroke-width="1.15"/></svg>
<div class="t grid" style="left:436px;top:314px">9</div>
<div class="t grid" style="left:550px;top:314px;letter-spacing:-0.05px">Vorlage Mietvertrag</div>
<div class="t grid" style="left:910px;top:314px">Max Mustermann</div>
<div class="t grid" style="left:1090px;top:314px;letter-spacing:-0.07px">Mietvertrag_VM</div>
<div class="t grid" style="left:1270px;top:314px;color:#000">Aktiv</div>
<div class="a" style="left:360px;top:363px;width:1153px;height:1px;background:#e0e0e0"></div>
<div class="a" style="left:1261px;top:336px;width:180px;height:27px;background:#5cd65c"></div>
<svg style="left:377.00px;top:340.00px" width="18.00" height="18.00" viewBox="0 0 18 18" ><rect x="1" y="1" width="16" height="16" rx="1.6" fill="none" stroke="#7a7a7a" stroke-width="2"/><path d="M6.3 1V17M11.7 1V17M1 6.3H17M1 11.7H17" stroke="#7a7a7a" stroke-width="1.8"/></svg>
<svg style="left:396.72px;top:341.88px" width="20.00" height="14.00" viewBox="0 0 20 14"><path d="M13.2 10.5H7.35A3.1 3.1 0 0 1 7.35 4.3H14.35A1.9 1.9 0 0 1 14.35 8.1H8.25A0.9 0.9 0 0 1 8.25 6.3H12.3" fill="none" stroke="#777" stroke-width="1.15"/></svg>
<div class="t grid" style="left:436px;top:342px">10</div>
<div class="t grid" style="left:550px;top:342px;letter-spacing:-0.05px">Vorlage Mietvertrag</div>
<div class="t grid" style="left:910px;top:342px">Max Mustermann</div>
<div class="t grid" style="left:1090px;top:342px;letter-spacing:-0.07px">Mietvertrag_VM</div>
<div class="t grid" style="left:1270px;top:342px;color:#000">Aktiv</div>
<div class="a" style="left:360px;top:391px;width:1153px;height:1px;background:#e0e0e0"></div>
<div class="a" style="left:1261px;top:364px;width:180px;height:27px;background:#5cd65c"></div>
<svg style="left:377.00px;top:368.00px" width="18.00" height="18.00" viewBox="0 0 18 18" ><rect x="1" y="1" width="16" height="16" rx="1.6" fill="none" stroke="#7a7a7a" stroke-width="2"/><path d="M6.3 1V17M11.7 1V17M1 6.3H17M1 11.7H17" stroke="#7a7a7a" stroke-width="1.8"/></svg>
<svg style="left:396.72px;top:369.88px" width="20.00" height="14.00" viewBox="0 0 20 14"><path d="M13.2 10.5H7.35A3.1 3.1 0 0 1 7.35 4.3H14.35A1.9 1.9 0 0 1 14.35 8.1H8.25A0.9 0.9 0 0 1 8.25 6.3H12.3" fill="none" stroke="#777" stroke-width="1.15"/></svg>
<div class="t grid" style="left:436px;top:370px">11</div>
<div class="t grid" style="left:550px;top:370px;letter-spacing:-0.05px">Vorlage Mietvertrag</div>
<div class="t grid" style="left:910px;top:370px">Max Mustermann</div>
<div class="t grid" style="left:1090px;top:370px;letter-spacing:-0.07px">Mietvertrag_VM</div>
<div class="t grid" style="left:1270px;top:370px;color:#000">Aktiv</div>
<div class="a" style="left:360px;top:419px;width:1153px;height:1px;background:#e0e0e0"></div>
<div class="a" style="left:1261px;top:392px;width:180px;height:27px;background:#5cd65c"></div>
<svg style="left:377.00px;top:396.00px" width="18.00" height="18.00" viewBox="0 0 18 18" ><rect x="1" y="1" width="16" height="16" rx="1.6" fill="none" stroke="#7a7a7a" stroke-width="2"/><path d="M6.3 1V17M11.7 1V17M1 6.3H17M1 11.7H17" stroke="#7a7a7a" stroke-width="1.8"/></svg>
<svg style="left:396.72px;top:397.88px" width="20.00" height="14.00" viewBox="0 0 20 14"><path d="M13.2 10.5H7.35A3.1 3.1 0 0 1 7.35 4.3H14.35A1.9 1.9 0 0 1 14.35 8.1H8.25A0.9 0.9 0 0 1 8.25 6.3H12.3" fill="none" stroke="#777" stroke-width="1.15"/></svg>
<div class="t grid" style="left:436px;top:398px">12</div>
<div class="t grid" style="left:550px;top:398px;letter-spacing:-0.05px">Vorlage Mietvertrag</div>
<div class="t grid" style="left:910px;top:398px">Max Mustermann</div>
<div class="t grid" style="left:1090px;top:398px;letter-spacing:-0.07px">Mietvertrag_VM</div>
<div class="t grid" style="left:1270px;top:398px;color:#000">Aktiv</div>
</div></div>
</body></html>
